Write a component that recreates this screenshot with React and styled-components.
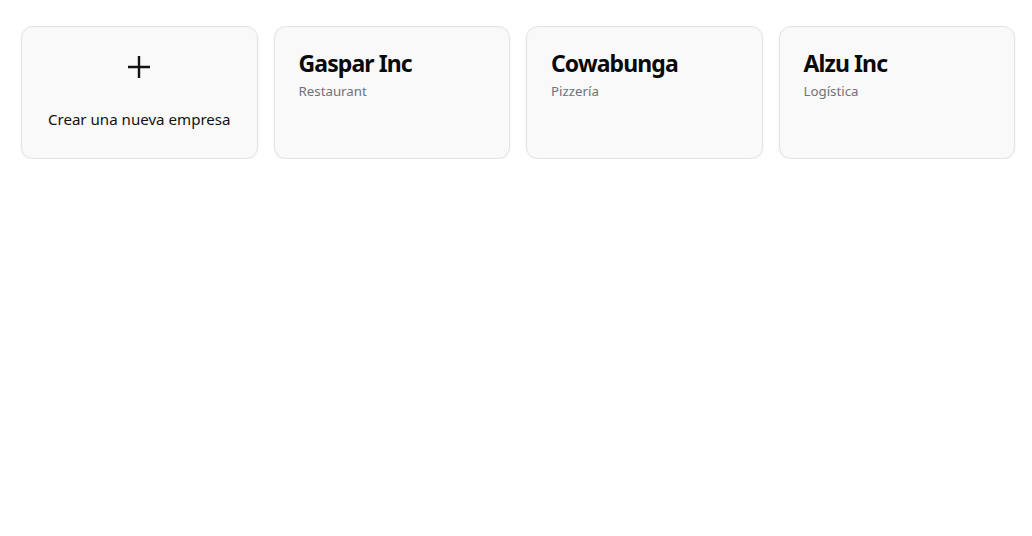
import React from 'react';
import styled, { createGlobalStyle } from 'styled-components';

const GlobalStyle = createGlobalStyle`
  body {
    margin: 0;
    background: #fff;
    font-family: "Noto Sans", "Open Sans", sans-serif;
  }
`;

const companies = [
  { name: 'Gaspar Inc', type: 'Restaurant' },
  { name: 'Cowabunga', type: 'Pizzería' },
  { name: 'Alzu Inc', type: 'Logística' },
];

const Grid = styled.div`
  display: grid;
  grid-template-columns: repeat(4, 1fr);
  gap: 16px;
  padding: 26px 17px 0 21px;
`;

const Card = styled.div`
  box-sizing: border-box;
  height: 133px;
  background: #f9f9f9;
  border: 1px solid #e3e3e3;
  border-radius: 12px;
  box-shadow: 0 1px 3px rgba(0, 0, 0, 0.06);
  display: flex;
  flex-direction: column;
  padding: ${(p) => (p.$center ? '28px 16px 0' : '21px 24px')};
  align-items: ${(p) => (p.$center ? 'center' : 'flex-start')};
  cursor: pointer;
`;

const Plus = styled.div`
  width: 24px;
  height: 24px;
  color: #111;
`;

const NewLabel = styled.div`
  margin-top: 30px;
  font-size: 15.1px;
  color: #111;
`;

const Title = styled.div`
  font-size: 23px;
  font-weight: 700;
  letter-spacing: -0.9px;
  color: #0a0a0a;
  line-height: 30px;
`;

const Subtitle = styled.div`
  font-size: 13.3px;
  color: #71717a;
  margin-top: 4px;
`;

export default function App() {
  return (
    <>
      <GlobalStyle />
      <Grid>
        <Card $center>
          <Plus>
            <svg width="24" height="24" viewBox="0 0 24 24" fill="none" stroke="currentColor" strokeWidth="2.4">
              <path d="M12 1v22M1 12h22" />
            </svg>
          </Plus>
          <NewLabel>Crear una nueva empresa</NewLabel>
        </Card>
        {companies.map((c) => (
          <Card key={c.name}>
            <Title>{c.name}</Title>
            <Subtitle>{c.type}</Subtitle>
          </Card>
        ))}
      </Grid>
    </>
  );
}
